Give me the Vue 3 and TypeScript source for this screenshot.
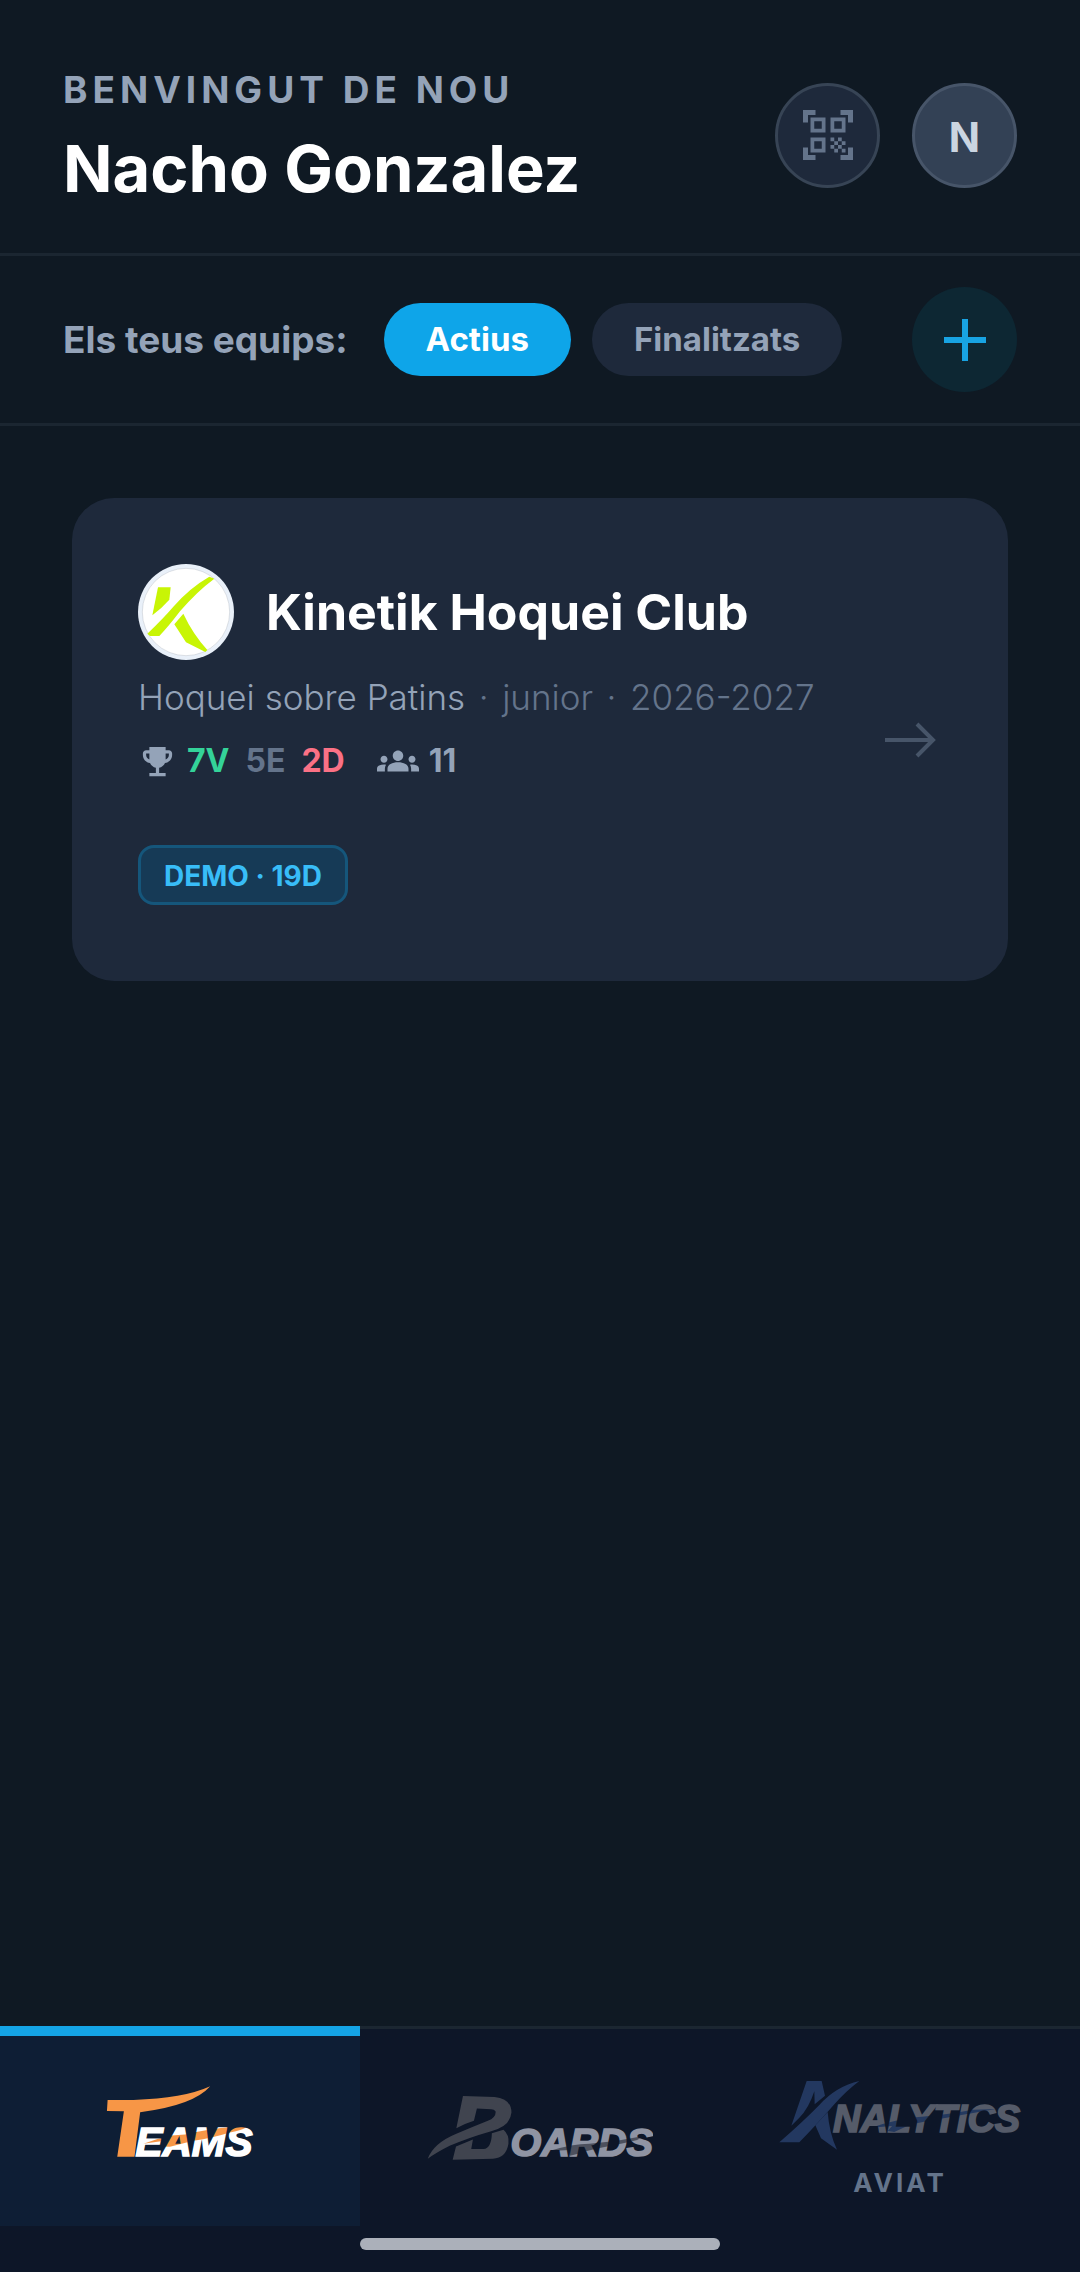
<script setup lang="ts">
import { ref } from 'vue'

type Filter = 'actius' | 'finalitzats'

const filter = ref<Filter>('actius')
const filters: { id: Filter; label: string }[] = [
  { id: 'actius', label: 'Actius' },
  { id: 'finalitzats', label: 'Finalitzats' },
]

const user = { name: 'Nacho Gonzalez', initial: 'N' }
const team = {
  name: 'Kinetik Hoquei Club',
  sport: 'Hoquei sobre Patins',
  category: 'junior',
  season: '2026-2027',
  won: 7,
  drawn: 5,
  lost: 2,
  players: 11,
  badge: 'DEMO · 19D',
}
</script>

<template>
  <div class="page">
    <header class="header">
      <div class="greeting">
        <p class="welcome">BENVINGUT DE NOU</p>
        <h1 class="name">{{ user.name }}</h1>
      </div>
      <div class="actions">
        <button class="round scan" type="button" aria-label="Escaneja QR">
          <svg viewBox="0 0 24 24" width="60" height="60" fill="currentColor">
            <path d="M9.500 6.500v3h-3v-3zM11 5H5v6h6zM9.500 14.500v3h-3v-3zM11 13H5v6h6zM17.500 6.500v3h-3v-3zM19 5h-6v6h6zM13 13h1.500v1.500H13zM14.500 14.500H16V16h-1.500zM16 13h1.500v1.500H16zM13 16h1.500v1.500H13zM14.500 17.500H16V19h-1.500zM16 16h1.500v1.500H16zM17.500 14.500H19V16h-1.500zM17.500 17.500H19V19h-1.500zM22 7h-2V4h-3V2h5zM22 22v-5h-2v3h-3v2zM2 22h5v-2H4v-3H2zM2 2v5h2V4h3V2z" fill-rule="evenodd" />
          </svg>
        </button>
        <button class="round avatar" type="button">{{ user.initial }}</button>
      </div>
    </header>

    <section class="filters">
      <span class="filters-label">Els teus equips:</span>
      <div class="pills">
        <button
          v-for="f in filters"
          :key="f.id"
          type="button"
          class="pill"
          :class="{ active: filter === f.id }"
          @click="filter = f.id"
        >{{ f.label }}</button>
      </div>
      <button class="round add" type="button" aria-label="Afegeix equip">
        <svg viewBox="0 0 42 42" width="42" height="42">
          <path d="M0 21H42M21 0V42" stroke="currentColor" stroke-width="6" />
        </svg>
      </button>
    </section>

    <main class="content">
      <a class="card" href="#equip">
        <div class="info">
          <div class="title-row">
            <svg class="crest" viewBox="24 27 288 288" width="96" height="96">
              <circle cx="168" cy="171" r="144" fill="#e9f0f9" />
              <circle cx="168" cy="171" r="131" fill="#fff" stroke="#a5abb2" stroke-width="1" />
              <g fill="#c8f505">
                <path d="M84 97L122 97L118 134Q95 160 67 181Z" />
                <path d="M52 236Q100 190 130 155Q180 98 238 65L253 71Q200 110 150 169Q115 215 88 243L60 243Z" />
                <path d="M133 208L160 176Q188 236 232 285L226 291L168 262Z" />
              </g>
            </svg>
            <h2 class="team">{{ team.name }}</h2>
          </div>
          <p class="meta">
            <span class="sport">{{ team.sport }}</span>
            <span class="dot">·</span>
            <span>{{ team.category }}</span>
            <span class="dot">·</span>
            <span>{{ team.season }}</span>
          </p>
          <div class="stats">
            <svg viewBox="0 0 24 24" width="39" height="39" fill="currentColor">
              <path d="M19 5h-2V3H7v2H5c-1.100 0-2 .9-2 2v1c0 2.550 1.920 4.630 4.390 4.940.630 1.500 1.980 2.630 3.610 2.960V19H7v2h10v-2h-4v-3.100c1.630-.330 2.980-1.460 3.610-2.960C19.080 12.630 21 10.550 21 8V7c0-1.100-.9-2-2-2zM5 8V7h2v3.820C5.840 10.400 5 9.300 5 8zm14 0c0 1.300-.840 2.400-2 2.820V7h2z" />
            </svg>
            <span class="won">{{ team.won }}V</span>
            <span class="drawn">{{ team.drawn }}E</span>
            <span class="lost">{{ team.lost }}D</span>
            <svg class="people" viewBox="0 0 24 24" width="42" height="42" fill="currentColor">
              <path d="M12 12.750c1.630 0 3.070.390 4.240.9 1.080.480 1.760 1.560 1.760 2.730V18H6v-1.610c0-1.180.680-2.260 1.760-2.730 1.170-.520 2.610-.910 4.240-.910zM4 13c1.100 0 2-.9 2-2s-.9-2-2-2-2 .9-2 2 .9 2 2 2zm1.130 1.100C4.760 14.040 4.390 14 4 14c-.990 0-1.930.210-2.780.580C.480 14.900 0 15.620 0 16.430V18h4.500v-1.610c0-.830.230-1.610.630-2.290zM20 13c1.100 0 2-.9 2-2s-.9-2-2-2-2 .9-2 2 .9 2 2 2zm4 3.430c0-.810-.480-1.530-1.220-1.850C21.930 14.210 20.990 14 20 14c-.390 0-.760.040-1.130.1.400.680.630 1.460.630 2.290V18H24zM12 6c1.660 0 3 1.340 3 3s-1.340 3-3 3-3-1.340-3-3 1.340-3 3-3z" />
            </svg>
            <span>{{ team.players }}</span>
          </div>
          <span class="badge">{{ team.badge }}</span>
        </div>
        <svg class="arrow" viewBox="0 0 51 36" width="51" height="36" fill="none" stroke="currentColor" stroke-width="4">
          <path d="M0 18H48M32 2L48 18L32 34" />
        </svg>
      </a>
    </main>

    <nav class="nav">
      <div class="tabs">
        <a class="tab current" href="#teams" aria-current="page">
          <svg viewBox="312 222 459 262" width="153" height="87">
            <defs>
              <pattern id="teams-fill" patternUnits="userSpaceOnUse" x="312" y="222" width="459" height="262">
                <rect width="459" height="262" fill="#fff" />
                <path transform="translate(-312 -222)" fill="#f79646" d="M430 402Q470 386 515 377L555 374Q640 354 690 352L745 350Q720 364 690 368Q640 384 580 393L510 411L486 410L498 392Z" />
              </pattern>
            </defs>
            <path fill="#f79646" d="M322 270H400Q550 266 631 229Q580 287 420 307L403 441H351L371 304L320 303Z" />
            <text x="406" y="440" class="word" font-size="122" fill="url(#teams-fill)" stroke="url(#teams-fill)">EAMS</text>
          </svg>
        </a>
        <a class="tab" href="#boards">
          <svg viewBox="203 222 678 262" width="226" height="87">
            <defs>
              <pattern id="boards-fill" patternUnits="userSpaceOnUse" x="203" y="222" width="678" height="262">
                <rect width="678" height="262" fill="#8f94a3" />
                <path transform="translate(-203 -222)" fill="#4c505d" d="M570 424Q640 402 690 402Q770 396 850 379L835 391Q800 400 760 407Q690 420 660 431L632 438V421Z" />
              </pattern>
            </defs>
            <g fill="#40444f">
              <path d="M310 258L405 261Q456 266 456 308Q452 350 395 364Q325 384 270 408Q230 428 204 447Q222 400 290 372Q340 351 385 333Q411 322 408 304Q404 298 395 298L352 296L343 333Q312 343 290 355Z" />
              <path d="M397 370L432 360Q450 375 447 402Q440 445 400 447L279 450L289 410L340 389L335 418H372Q396 415 397 370Z" />
            </g>
            <text x="453" y="440" class="word" font-size="119" fill="url(#boards-fill)" stroke="url(#boards-fill)">OARDS</text>
          </svg>
        </a>
        <a class="tab" href="#analytics">
          <svg viewBox="176 134 732 288" width="244" height="96">
            <defs>
              <pattern id="analytics-fill" patternUnits="userSpaceOnUse" x="176" y="134" width="732" height="288">
                <rect width="732" height="288" fill="#555b69" />
                <path transform="translate(-176 -134)" fill="#24395f" d="M455 352Q520 330 590 321Q690 312 760 298L830 296Q750 310 700 319Q620 332 575 342L525 365L505 362L518 347Z" />
              </pattern>
            </defs>
            <g fill="#233860">
              <path d="M262 212H307L317 256L286 282L285 243Q268 295 240 322L216 346Z" />
              <path d="M180 396Q250 335 300 284Q350 228 420 212Q380 242 345 282Q290 345 240 396Z" />
              <path d="M288 345L325 305Q330 370 353 418L305 384Z" />
            </g>
            <text x="341" y="365" class="word" font-size="114" fill="url(#analytics-fill)" stroke="url(#analytics-fill)">NALYTICS</text>
          </svg>
          <span class="soon">AVIAT</span>
        </a>
      </div>
      <div class="indicator"></div>
    </nav>
  </div>
</template>

<style>
body {
  background: #0f1923;
}
</style>

<style scoped>
.page {
  min-height: 100vh;
  display: flex;
  flex-direction: column;
  background: #0f1923;
  color: #94a3b8;
  font-family: Inter, "Noto Sans", sans-serif;
  font-weight: 700;
}
p,
h1,
h2 {
  margin: 0;
}
svg {
  display: block;
}
button {
  border: 0;
  padding: 0;
  font: inherit;
  cursor: pointer;
}
a {
  color: inherit;
  text-decoration: none;
}
.header {
  display: flex;
  align-items: center;
  justify-content: space-between;
  padding: 64px 63px 47px;
  border-bottom: 3px solid #1b2631;
}
.greeting {
  display: flex;
  flex-direction: column;
  gap: 16px;
}
.welcome {
  font-size: 37px;
  line-height: 52px;
  letter-spacing: 5px;
}
.name {
  font-size: 65px;
  line-height: 74px;
  color: #fff;
}
.actions {
  display: flex;
  gap: 32px;
}
.round {
  box-sizing: border-box;
  width: 105px;
  height: 105px;
  flex: none;
  border-radius: 50%;
  display: flex;
  align-items: center;
  justify-content: center;
}
.scan {
  background: #1e293b;
  border: 3px solid #374455;
  color: #64748b;
}
.avatar {
  padding-top: 4px;
  background: #334155;
  border: 3px solid #475569;
  color: #cbd5e1;
  font-size: 41px;
}
.add {
  margin-left: auto;
  background: #0d2733;
  color: #18a3e2;
}
.filters {
  display: flex;
  align-items: center;
  padding: 31px 63px;
  border-bottom: 3px solid #1b2631;
}
.filters-label {
  font-size: 37px;
  line-height: 48px;
}
.pills {
  display: flex;
  gap: 21px;
  margin-left: 36px;
}
.pill {
  padding: 0 42px;
  border-radius: 37px;
  font-size: 33px;
  line-height: 73px;
  background: #1e293b;
  color: #94a3b8;
}
.pill.active {
  background: #0ea5e9;
  color: #fff;
}
.content {
  flex: 1;
  padding: 72px;
}
.card {
  display: flex;
  align-items: center;
  justify-content: space-between;
  padding: 66px 72px 66px 66px;
  border-radius: 42px;
  background: #1e293b;
}
.info {
  display: flex;
  flex-direction: column;
  align-items: flex-start;
  padding-bottom: 10px;
}
.title-row {
  display: flex;
  align-items: center;
  gap: 32px;
}
.team {
  font-size: 50px;
  line-height: 60px;
  color: #fff;
}
.meta {
  display: flex;
  margin-top: 10px;
  font-size: 35px;
  line-height: 54px;
  font-weight: 300;
  color: #64748b;
}
.sport {
  color: #94a3b8;
}
.dot {
  width: 37px;
  text-align: center;
}
.stats {
  display: flex;
  align-items: center;
  margin-top: 16px;
  font-size: 32px;
  line-height: 42px;
}
.won {
  margin-left: 10px;
  color: #34d399;
}
.drawn {
  margin-left: 16px;
  color: #64748b;
}
.lost {
  margin-left: 16px;
  color: #fb7185;
}
.people {
  margin: 0 10px 0 32px;
}
.badge {
  margin-top: 63px;
  padding: 2px 23px 0;
  border: 3px solid #15567b;
  border-radius: 16px;
  background: #163a56;
  color: #38bdf8;
  font-size: 28px;
  line-height: 52px;
}
.arrow {
  flex: none;
  color: #475569;
}
.nav {
  background: #0d1628;
  border-top: 3px solid #1b2631;
}
.tabs {
  display: grid;
  grid-template-columns: repeat(3, 1fr);
}
.tab {
  position: relative;
  min-height: 197px;
  display: flex;
  flex-direction: column;
  align-items: center;
  justify-content: center;
  gap: 14px;
}
.tab.current {
  background: #0e1e35;
}
.tab.current::before {
  content: "";
  position: absolute;
  top: -3px;
  left: 0;
  right: 0;
  height: 10px;
  background: #14a4e6;
}
.word {
  font-family: "Liberation Sans", Arial, sans-serif;
  font-weight: 700;
  font-style: italic;
  stroke-width: 5px;
}
.soon {
  font-size: 26px;
  line-height: 36px;
  letter-spacing: 3px;
  color: #64748b;
}
.indicator {
  width: 33.333%;
  height: 12px;
  margin: 12px auto 22px;
  border-radius: 6px;
  background: #abb0ba;
}
</style>
